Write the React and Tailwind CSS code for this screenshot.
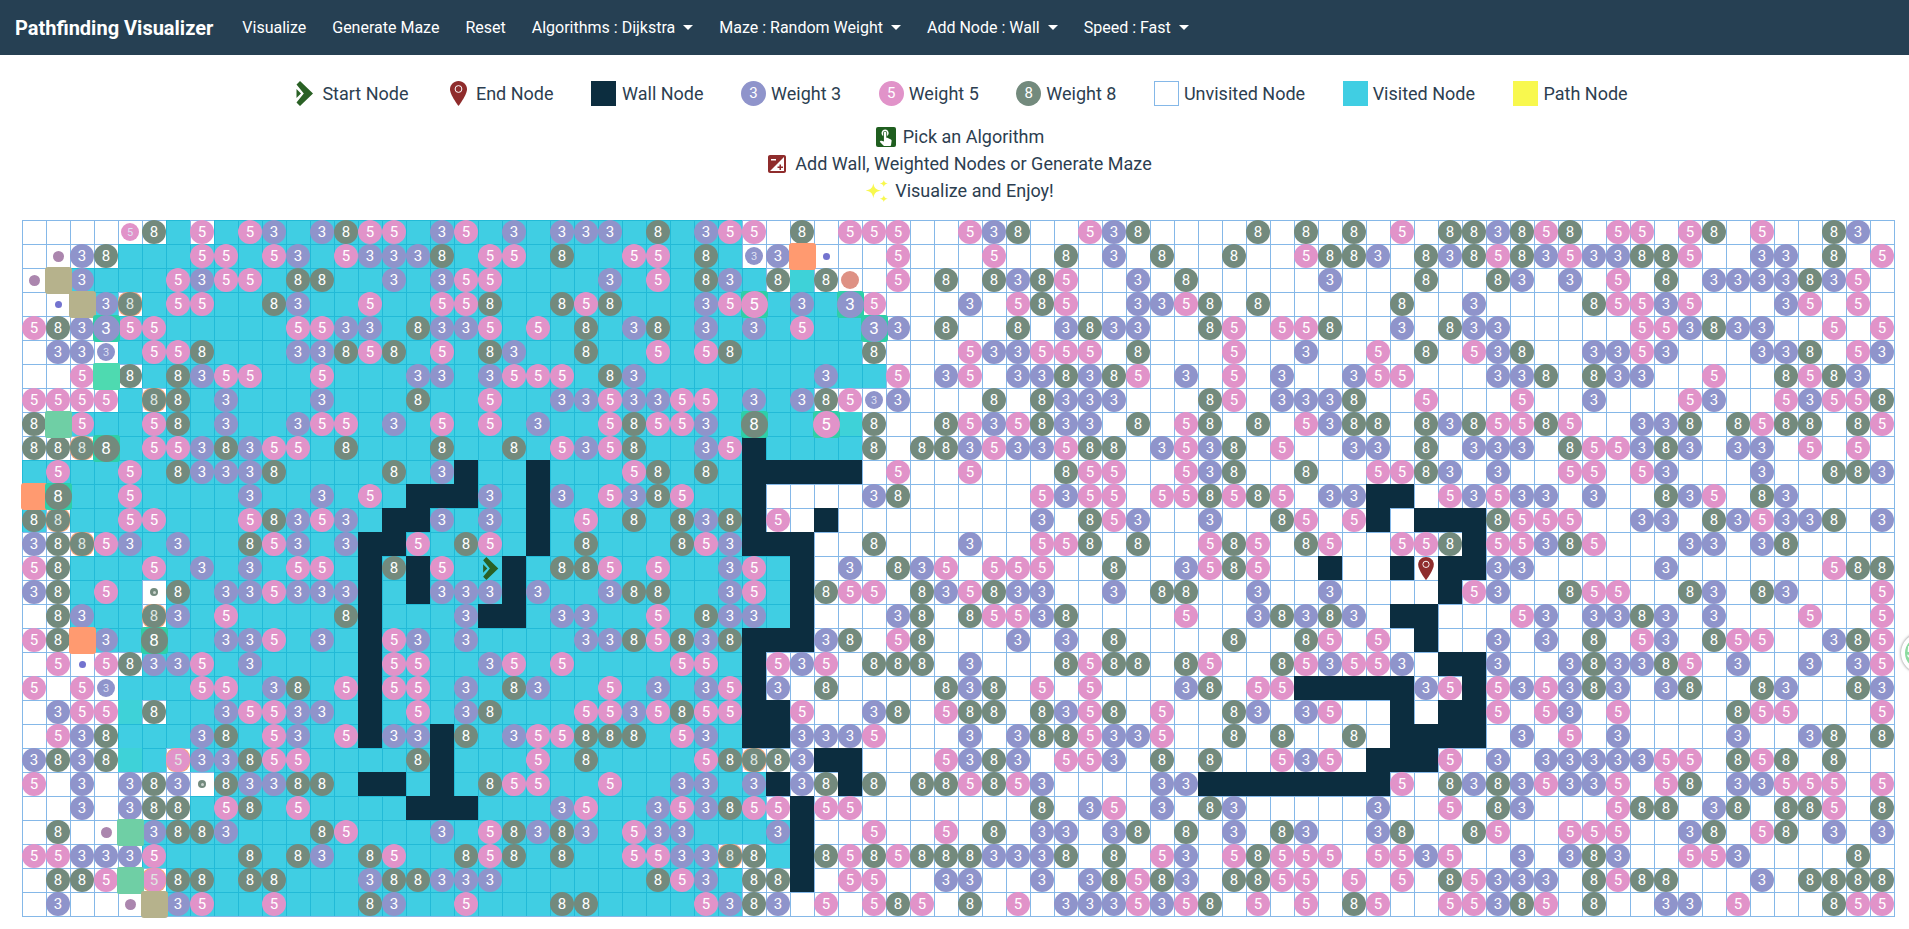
import React from "react";
import { MdTouchApp, MdExposure } from "react-icons/md";

const ROWS = [
  [6, 29, "4:5s 5:8 7:5w 9:5 10:3 12:3 13:8 14:5 15:5 17:3 18:5 20:3 22:3 23:3 24:3 26:8 28:3 29:5 30:5 32:8 34:5 35:5 36:5 39:5 40:3 41:8 44:5 45:3 46:8 51:8 53:8 55:8 57:5 59:8 60:8 61:3 62:8 63:5 64:8 66:5 67:5 69:5 70:8 72:5 75:8 76:3"],
  [4, 29, "1:P 2:3 3:8 7:5 8:5 10:5 11:3 13:5 14:3 15:3 16:3 17:8 19:5 20:5 22:8 25:5 26:5 28:8 30:3s 31:3 32:O 33:B 36:5 40:5 43:8 45:3 47:8 50:8 53:5 54:8 55:8 56:3 58:8 59:3 60:8 61:5 62:8 63:3 64:5 65:3 66:3 67:8 68:8 69:5 72:3 73:3 75:8 77:5"],
  [2, 30, "0:P 1:K 2:3 6:5 7:3 8:5 9:5 11:8 12:8 15:3 17:3 18:5 19:5 24:3 26:5 28:8 29:3 31:8 32:T 33:8 34:A 36:5 38:8 40:8 41:3 42:8 43:5 46:3 48:8 54:3 58:8 61:8 62:3 64:3 66:5 68:8 70:3 71:3 72:3 73:3 74:8 75:3 76:5"],
  [3, 34, "1:B 2:K 3:3 4:8o 6:5 7:5 10:8 11:3 14:5 17:5 18:5 19:8 22:8 23:5 24:8 28:3 29:5 30:5b 32:3 34:3b 35:5 39:3 41:5 42:8 43:5 46:3 47:3 48:5 49:8 51:8 57:8 60:3 65:8 66:5 67:5 68:3 69:5 73:3 74:5 76:5"],
  [4, 34, "0:5 1:8 2:3 3:3b 4:5 5:5 11:5 12:5 13:3 14:3 16:8 17:3 18:3 19:5 21:5 23:8 25:3 26:8 28:3 30:3 32:5 35:3b 36:3 38:8 41:8 43:3 44:8 45:3 46:3 49:8 50:5 52:5 53:5 54:8 57:3 59:8 60:3 61:3 67:5 68:5 69:3 70:8 71:3 72:3 75:5 77:5"],
  [4, 34, "1:3 2:3 3:3s 5:5 6:5 7:8 11:3 12:3 13:8 14:5 15:8 17:5 19:8 20:3 23:8 26:5 28:5 29:8 35:8 39:5 40:3 41:3 42:5 43:5 44:5 46:8 50:5 53:3 56:5 58:8 60:5 61:3 62:8 65:3 66:3 67:5 68:3 72:3 73:3 74:8 76:5 77:3"],
  [5, 35, "2:5 3:M 4:8 6:8 7:3 8:5 9:5 12:5 16:3 17:3 19:3 20:5 21:5 22:5 24:8 25:3 33:3 36:5 38:3 39:5 41:3 42:3 43:8 44:3 45:8 46:5 48:3 50:5 52:3 55:3 56:5 57:5 61:3 62:3 63:8 65:8 66:3 67:3 70:5 73:8 74:5 75:8 76:3"],
  [4, 32, "0:5 1:5 2:5 3:5 5:8o 6:8 8:3 12:3 16:8 19:5 22:3 23:3 24:5 25:3 26:3 27:5 28:5 30:3 32:3 33:8 34:5 35:3s 36:3 40:8 42:8 43:3 44:3 45:3 49:8 50:5 52:3 53:3 54:3 55:8 58:5 62:5 65:3 69:5 70:3 73:5 74:3 75:5 76:5 77:8"],
  [2, 34, "0:8 1:G 2:5 5:5 6:8 8:3 11:3 12:5 13:5 15:3 17:5 19:5 21:3 24:5 25:8 26:5 27:5 28:3 30:8b 33:5b 34:T 35:8 38:8 39:5 40:3 41:5 42:8 43:3 44:3 46:8 48:5 49:8 51:8 53:5 54:3 55:8 56:8 58:8 59:3 60:8 61:5 62:5 63:8 64:5 67:3 68:3 69:8 71:8 72:5 73:8 74:8 76:8 77:5"],
  [4, 34, "0:8 1:8 2:8o 3:8b 5:5 6:5 7:3 8:8 9:3 10:5 11:5 13:8 17:8 20:8 22:5 23:3 24:5 25:8 28:3 29:5 30:# 35:8 37:8 38:8 39:3 40:5 41:3 42:3 43:5 44:8 45:8 47:3 48:5 49:3 50:8 52:5 55:3 56:3 58:8 60:3 61:3 62:3 64:8 65:5 66:5 67:3 68:8 69:3 71:3 72:3 74:5 76:5"],
  [0, 29, "1:5 4:5 6:8 7:3 8:3 9:3 10:8 15:8 17:3 18:# 21:# 25:5 26:8 28:8 30-34:# 36:5 39:5 43:8 44:5 45:5 48:5 49:3 50:8 53:8 56:5 57:5 58:8 59:3 61:3 64:5 65:5 67:5 68:3 72:3 75:8 76:8 77:3"],
  [1, 29, "0:O 1:8b 4:5 9:3 12:3 14:5 16-18:# 19:3 21:# 22:3 24:5 25:3 26:8 27:5 30:# 35:3 36:8 42:5 43:3 44:5 45:5 47:5 48:5 49:8 50:5 51:8 52:5 54:3 55:3 56-57:# 59:5 60:3 61:5 62:3 63:3 65:3 68:8 69:3 70:5 72:8 73:3"],
  [0, 29, "0:8 1:8o 4:5 5:5 9:5 10:8 11:3 12:5 13:3 15-16:# 17:3 19:3 21:# 23:5 25:8 27:8 28:3 29:8 30:# 31:5 33:# 42:3 44:8 45:5 46:3 49:3 52:8 53:5 55:5 56:# 58-60:# 61:8 62:5 63:5 64:5 67:3 68:3 70:8 71:3 72:5 73:3 74:3 75:8 77:3"],
  [3, 29, "0:3 1:8 2:8o 3:5 4:3 6:3 9:8 10:5 11:3 13:3 14-15:# 16:5 18:8 19:5 21:# 23:8 27:8 28:5 29:3 30-32:# 35:8 39:3 42:5 43:5 44:8 46:8 49:5 50:8 51:5 53:8 54:5 57:5 58:5 59:8 60:# 61:5 62:5 63:3 64:8 65:5 69:3 70:3 72:3 73:8"],
  [2, 31, "0:5 1:8 5:5 7:3 9:3 11:5 12:5 14:# 15:8 16:# 17:5 19:S 20:# 22:8 23:8 24:5 26:5 29:3 30:5 32:# 34:3 36:8 37:3 38:5 40:5 41:5 42:5 45:8 48:3 49:5 50:8 51:5 54:# 57:# 58:E 59-60:# 61:3 62:3 68:3 75:5 76:8 77:8"],
  [2, 31, "0:3 1:8 3:5 5:D 6:8 8:3 9:3 10:5 11:3 12:3 13:3 14:# 16:# 17:3 18:3 19:3 20:# 21:3 24:3 25:8 26:8 29:3 30:5 32:# 33:8 34:5 35:5 37:8 38:3 39:5 40:8 41:3 42:3 45:3 47:8 48:8 51:3 54:3 59:# 60:5 61:3 64:8 65:5 66:5 69:8 70:3 72:8 73:3 77:5"],
  [2, 31, "1:8 2:3 5:8o 6:3 8:5 13:8 14:# 18:3 19-20:# 22:3 23:3 26:5 28:8 29:3 30:3 32:# 36:3 37:8 39:8 40:5 41:5 42:3 43:8 48:5 51:3 52:8 53:3 54:8 55:3 57-58:# 62:5 63:3 65:3 66:3 67:8 68:3 70:3 74:5 77:5"],
  [3, 29, "0:5 1:8 2:O 3:3 5:8b 8:3 9:3 10:5 12:3 14:# 15:5 16:3 18:3 23:3 24:3 25:8 26:5 27:8 28:3 29:8 30-32:# 33:3 34:8 36:5 37:8 41:3 43:3 45:8 50:8 53:8 54:5 56:5 58:# 61:3 63:3 65:8 67:5 68:3 70:8 71:5 72:5 75:3 76:8 77:5"],
  [5, 29, "1:5 2:B 3:5 4:8 5:3 6:3 7:5 9:3 14:# 15:5 16:5 19:3 20:5 22:5 27:5 28:5 30:# 31:5 32:3 33:5 35:8 36:8 37:8 39:3 43:8 44:5 45:8 46:8 48:8 49:5 52:8 53:5 54:3 55:5 56:5 57:3 59-60:# 61:3 64:3 65:8 66:3 67:3 68:8 69:5 71:3 74:3 76:3 77:5"],
  [4, 29, "0:5 2:5 3:3s 7:5 8:5 10:3 11:8 13:5 14:# 15:5 16:5 18:3 20:8 21:3 24:5 26:3 28:3 29:5 30:# 31:3 33:8 38:8 39:3 40:8 42:5 44:5 48:3 49:8 51:5 52:5 53-57:# 58:3 59:5 60:# 61:5 62:3 63:5 64:3 65:8 66:3 68:3 69:8 72:8 73:3 76:8 77:3"],
  [6, 29, "1:3 2:5 3:5 4:T 5:8 8:3 9:5 10:5 11:3 12:3 14:# 16:5 18:3 19:8 23:5 24:5 25:3 26:5 27:8 28:5 29:5 30-31:# 32:5 35:3 36:8 38:5 39:8 40:8 42:8 43:3 44:5 45:8 47:5 50:8 51:3 53:3 54:5 57:# 59-60:# 61:5 63:5 64:3 66:5 71:8 72:5 73:5 77:5"],
  [4, 29, "1:5 2:3 3:8 7:3 8:8 10:5 11:3 13:5 14:# 15:3 16:3 17:# 18:8 20:3 21:5 22:5 23:8 24:8 25:8 27:5 28:3 30-31:# 32:3 33:3 34:3 35:5 39:3 41:3 42:8 43:8 44:5 45:3 46:3 47:5 50:8 52:8 55:8 57-60:# 62:3 64:5 66:3 71:3 74:3 75:8 77:8"],
  [4, 29, "0:3 1:8 2:3 3:8 4:T 6:5o 7:3 8:3 9:8 10:5 11:5 16:8 17:# 21:5 23:8 28:5 29:8 30:8o 31:8 32:3 33-34:# 38:5 39:3 40:8 41:3 43:5 44:5 45:3 47:8 49:8 52:5 53:3 54:5 56-58:# 59:5 61:3 63:3 64:3 65:3 66:3 67:3 68:5 69:5 71:8 72:5 73:8 75:8"],
  [8, 30, "0:5 2:3 4:3 5:8 6:3 7:D 8:8 9:3 10:3 11:8 12:8 14-15:# 17:# 19:8 20:5 21:5 24:5 27:3 28:3 30:3 31:# 32:3 33:8 34:# 35:8 37:8 38:8 39:5 40:8 41:5 42:3 47:3 48:3 49-56:# 57:5 59:8 60:3 61:8 62:3 63:5 64:3 65:3 66:5 68:5 69:8 71:3 72:3 73:5 74:5 75:5 77:5"],
  [7, 30, "2:3 4:3 5:8 6:8 8:5 9:8 11:5 16-18:# 22:3 23:5 26:3 27:5 28:3 29:8 30:5 31:5 32:# 33:5 34:5 42:8 44:3 45:5 47:3 49:8 50:3 56:3 59:5 61:8 62:3 66:5 67:8 68:8 70:3 71:8 73:8 74:8 75:5 77:8"],
  [5, 31, "1:8 3:P 4:G 5:3 6:8 7:8 8:3 12:8 13:5 17:3 19:5 20:8 21:3 22:8 23:3 25:5 26:3 27:3 31:3 32:# 35:5 38:5 40:8 42:3 43:3 45:3 46:8 48:8 50:3 52:8 53:3 56:3 57:8 60:8 61:5 64:5 65:5 66:5 69:3 70:8 72:5 73:8 75:3 77:3"],
  [5, 28, "0:5 1:5 2:3 3:3 4:3 5:5 9:8 11:8 12:3 14:8 15:5 18:8 19:5 20:8 22:8 25:5 26:5 27:3 28:3 29:8o 30:8 31:v 32:# 33:8 34:5 35:8 36:5 37:8 38:8 39:8 40:3 41:3 42:3 43:8 45:8 47:5 48:3 50:5 51:8 52:5 53:5 54:5 56:5 57:5 58:3 59:5 62:3 64:3 65:8 66:3 69:5 70:5 71:3 76:8"],
  [6, 29, "1:8 2:8 3:5 4:G 5:5o 6:8 7:8 9:8 10:8 14:3 15:8 16:8 17:3 18:3 19:3 26:8 27:5 28:3 30:8 31:8 32:# 34:5 35:5 38:3 39:3 42:3 44:3 45:8 46:5 47:8 48:3 50:8 51:8 52:5 53:5 55:5 57:5 59:8 60:5 61:3 62:3 63:3 65:8 66:5 67:8 68:8 72:3 74:8 75:8 76:8 77:8"],
  [6, 29, "1:3 4:P 5:K 6:3 7:5 10:5 14:8 15:3 18:5 22:8 23:8 28:5 29:3 30:8 31:3 33:5 35:5 36:8 37:5 39:8 41:5 43:3 44:3 45:3 46:5 47:3 48:5 49:8 51:5 53:5 55:8 56:5 59:5 60:5 61:3 62:8 63:5 65:8 68:3 69:3 71:5 75:8 76:5 77:5"],
];

function parseRow([vs, ve, str]) {
  const map = {};
  for (const tok of str.split(" ")) {
    const [pos, val] = tok.split(":");
    const [a, b] = pos.split("-").map(Number);
    for (let c = a; c <= (b ?? a); c++) map[c] = val;
  }
  return Array.from({ length: 78 }, (_, c) => {
    const val = map[c] || "";
    let visited = c >= vs && c <= ve;
    if (val === "v") visited = true;
    if (val.length > 1 && (val[1] === "o" || val[1] === "w" || val[1] === "s")) visited = false;
    if (["O", "K", "M", "G", "P", "B", "D", "A"].includes(val)) visited = false;
    return { val, visited };
  });
}

const circleColor = { 3: "bg-[#8f94cb]", 5: "bg-[#e193c9]", 8: "bg-[#738a7d]" };
const weightSize = {
  sm: "h-[18px] w-[18px] text-[11px] text-[#dfe1f3]",
  md: "h-[24px] w-[24px] text-[15px] text-white",
  faded: "h-[24px] w-[24px] text-[15px] text-[#dfe6e2]",
  lg: "h-[27px] w-[27px] text-[17px] text-white",
  legend: "h-[25px] w-[25px] text-[15px] text-white",
};

function Weight({ n, size = "md" }) {
  return (
    <div className={`flex shrink-0 items-center justify-center rounded-full leading-none ${circleColor[n]} ${weightSize[size]}`}>
      {n}
    </div>
  );
}

function StartIcon({ w = 17, h = 25 }) {
  return (
    <svg width={w} height={h} viewBox="0 0 17 25" className="shrink-0">
      <polygon fill="#2a6125" points="4,0 17,12.5 4,25 0.5,21.5 7.800,12.5 0.500,3.500" />
      <polygon fill="#2a6125" points="0.500,8 5,12.5 0.500,17" />
    </svg>
  );
}

function EndIcon({ w = 17, h = 25 }) {
  return (
    <svg width={w} height={h} viewBox="0 0 17 25" className="shrink-0">
      <path fill="#8f2c2c" d="M8.500 0C3.800 0 0 3.700 0 8.300 0 14 8.500 25 8.500 25S17 14 17 8.300C17 3.700 13.200 0 8.500 0z" />
      <circle cx="8.500" cy="8" r="3.400" fill="none" stroke="#fff" strokeWidth="1" />
    </svg>
  );
}

function Sparkles() {
  return (
    <svg width="22" height="22" viewBox="0 0 21 21" className="shrink-0">
      <path fill="#f8f84e" d="M7 3c.7 4.300 2.200 6 7.500 7-5.300 1-6.800 2.700-7.500 7.500-.7-4.800-2.200-6.500-7.500-7.500C4.800 9 6.300 7.300 7 3z" />
      <path fill="#f8f84e" d="M17 0c.4 2 1.100 2.800 3.800 3.300-2.700.5-3.400 1.300-3.800 3.400-.4-2.100-1.100-2.900-3.800-3.400C15.900 2.800 16.600 2 17 0z" />
      <path fill="#f8f84e" d="M17 14.500c.4 2 1.100 2.800 3.800 3.300-2.700.5-3.400 1.300-3.800 3.200-.4-1.900-1.100-2.700-3.800-3.200 2.700-.5 3.400-1.300 3.800-3.300z" />
    </svg>
  );
}

function Cell({ val, visited }) {
  if (val === "#") return <div className="h-[24px] w-[24px] bg-[#0c2d3f]" />;
  const bg = visited
    ? "bg-[#40cee3] shadow-[inset_1px_1px_0_#22bad7]"
    : "bg-white shadow-[inset_1px_1px_0_#85b8e8]";
  let inner = null;
  const n = val[0];
  const mod = val[1];
  if (n === "3" || n === "5" || n === "8") {
    if (!mod || mod === "w") inner = <Weight n={n} />;
    else if (mod === "s") inner = <Weight n={n} size="sm" />;
    else if (mod === "o")
      inner = (
        <div className="flex h-[24px] w-[24px] shrink-0 items-center justify-center rounded-[9px] bg-[#f6a67c]">
          <Weight n={n} size="faded" />
        </div>
      );
    else if (mod === "b")
      inner = (
        <div className="relative z-10 flex h-[27px] w-[27px] shrink-0 items-center justify-center rounded-[3px] bg-[#2ecfa8]">
          <Weight n={n} size="lg" />
        </div>
      );
  } else if (val === "K") inner = <div className="relative z-10 h-[27px] w-[27px] shrink-0 rounded-[3px] bg-[#b6b28c]" />;
  else if (val === "O") inner = <div className="relative z-10 h-[27px] w-[27px] shrink-0 rounded-[3px] bg-[#ff9a70]" />;
  else if (val === "M") inner = <div className="relative z-10 h-[27px] w-[27px] shrink-0 rounded-[2px] bg-[#4edab0]" />;
  else if (val === "G") inner = <div className="relative z-10 h-[27px] w-[27px] shrink-0 rounded-[2px] bg-[#6fcfa5]" />;
  else if (val === "T") inner = <div className="h-[24px] w-[24px] shrink-0 bg-[#3ed2d8]" />;
  else if (val === "P") inner = <div className="h-[11px] w-[11px] rounded-full bg-[#ab86ae]" />;
  else if (val === "B") inner = <div className="h-[7px] w-[7px] rounded-full bg-[#7373cf]" />;
  else if (val === "A") inner = <div className="h-[18px] w-[18px] rounded-full bg-[#de9184]" />;
  else if (val === "D")
    inner = (
      <div className="flex h-[8px] w-[8px] items-center justify-center rounded-full bg-[#738a7d]">
        <div className="h-[3px] w-[3px] rounded-full bg-[#c8d2cc]" />
      </div>
    );
  else if (val === "S") inner = <StartIcon w={17} h={23} />;
  else if (val === "E") inner = <EndIcon w={16} h={23} />;
  return <div className={`flex h-[24px] w-[24px] items-center justify-center ${bg}`}>{inner}</div>;
}

function LegendItem({ icon, label, gap = "gap-[6px]", extra = "" }) {
  return (
    <div className={`flex items-center ${gap} ${extra}`}>
      {icon}
      <span>{label}</span>
    </div>
  );
}

function Nav({ label, caret }) {
  return (
    <div className="flex items-center whitespace-nowrap text-[16px] text-white">
      {label}
      {caret && (
        <span className="ml-[8px] h-0 w-0 border-x-[5px] border-t-[5px] border-x-transparent border-t-white" />
      )}
    </div>
  );
}

export default function App() {
  return (
    <div className="relative h-[929px] overflow-hidden bg-white font-['Roboto',sans-serif] text-[#2c3e50]">
      <nav className="flex h-[55px] items-center bg-[#264053] pl-[15px]">
        <div className="mr-[29px] whitespace-nowrap text-[20px] font-bold text-white">Pathfinding Visualizer</div>
        <div className="flex items-center gap-[26px]">
          <Nav label="Visualize" />
          <Nav label="Generate Maze" />
          <Nav label="Reset" />
          <Nav label="Algorithms : Dijkstra" caret />
          <Nav label="Maze : Random Weight" caret />
          <Nav label="Add Node : Wall" caret />
          <Nav label="Speed : Fast" caret />
        </div>
      </nav>

      <div className="mt-[26px] flex h-[25px] items-center justify-center gap-[37.5px] pl-[15px] text-[18px] leading-[25px]">
        <LegendItem icon={<StartIcon />} label="Start Node" gap="gap-[9px]" />
        <LegendItem icon={<EndIcon />} label="End Node" gap="gap-[9px]" extra="ml-[4px]" />
        <LegendItem icon={<div className="h-[25px] w-[25px] bg-[#0c2d3f]" />} label="Wall Node" />
        <LegendItem icon={<Weight n="3" size="legend" />} label="Weight 3" gap="gap-[5px]" />
        <LegendItem icon={<Weight n="5" size="legend" />} label="Weight 5" gap="gap-[5px]" />
        <LegendItem icon={<Weight n="8" size="legend" />} label="Weight 8" gap="gap-[5px]" />
        <LegendItem icon={<div className="h-[25px] w-[25px] border border-[#85b8e8] bg-white" />} label="Unvisited Node" gap="gap-[5px]" />
        <LegendItem icon={<div className="h-[25px] w-[25px] bg-[#40cee3]" />} label="Visited Node" gap="gap-[5px]" />
        <LegendItem icon={<div className="h-[25px] w-[25px] bg-[#f8f84e]" />} label="Path Node" />
      </div>

      <div className="mt-[17px] flex flex-col items-center pl-[11px] text-[18px] leading-[27px]">
        <div className="flex h-[27px] items-center gap-[7px]">
          <span className="flex h-[20px] w-[20px] items-center justify-center rounded-[2px] bg-[#1f5e1f] text-white">
            <MdTouchApp size={19} />
          </span>
          Pick an Algorithm
        </div>
        <div className="flex h-[27px] items-center gap-[9px]">
          <MdExposure size={24} className="-mx-[3px] text-[#8f2c2c]" />
          Add Wall, Weighted Nodes or Generate Maze
        </div>
        <div className="flex h-[27px] items-center gap-[7px]">
          <Sparkles />
          Visualize and Enjoy!
        </div>
      </div>

      <div className="ml-[22px] mt-[16px] flex w-[1873px] flex-col border-b border-r border-[#85b8e8]">
        {ROWS.map((row, r) => (
          <div key={r} className="flex h-[24px]">
            {parseRow(row).map((cell, c) => (
              <Cell key={c} val={cell.val} visited={cell.visited} />
            ))}
          </div>
        ))}
      </div>

      <div className="fixed left-[1901px] top-[633px] flex h-[40px] w-[40px] items-center rounded-full border-[4px] border-white bg-[#8ddba0] pl-[1px] text-[16px] text-white shadow-[0_0_3px_#777]">
        5
      </div>
    </div>
  );
}
